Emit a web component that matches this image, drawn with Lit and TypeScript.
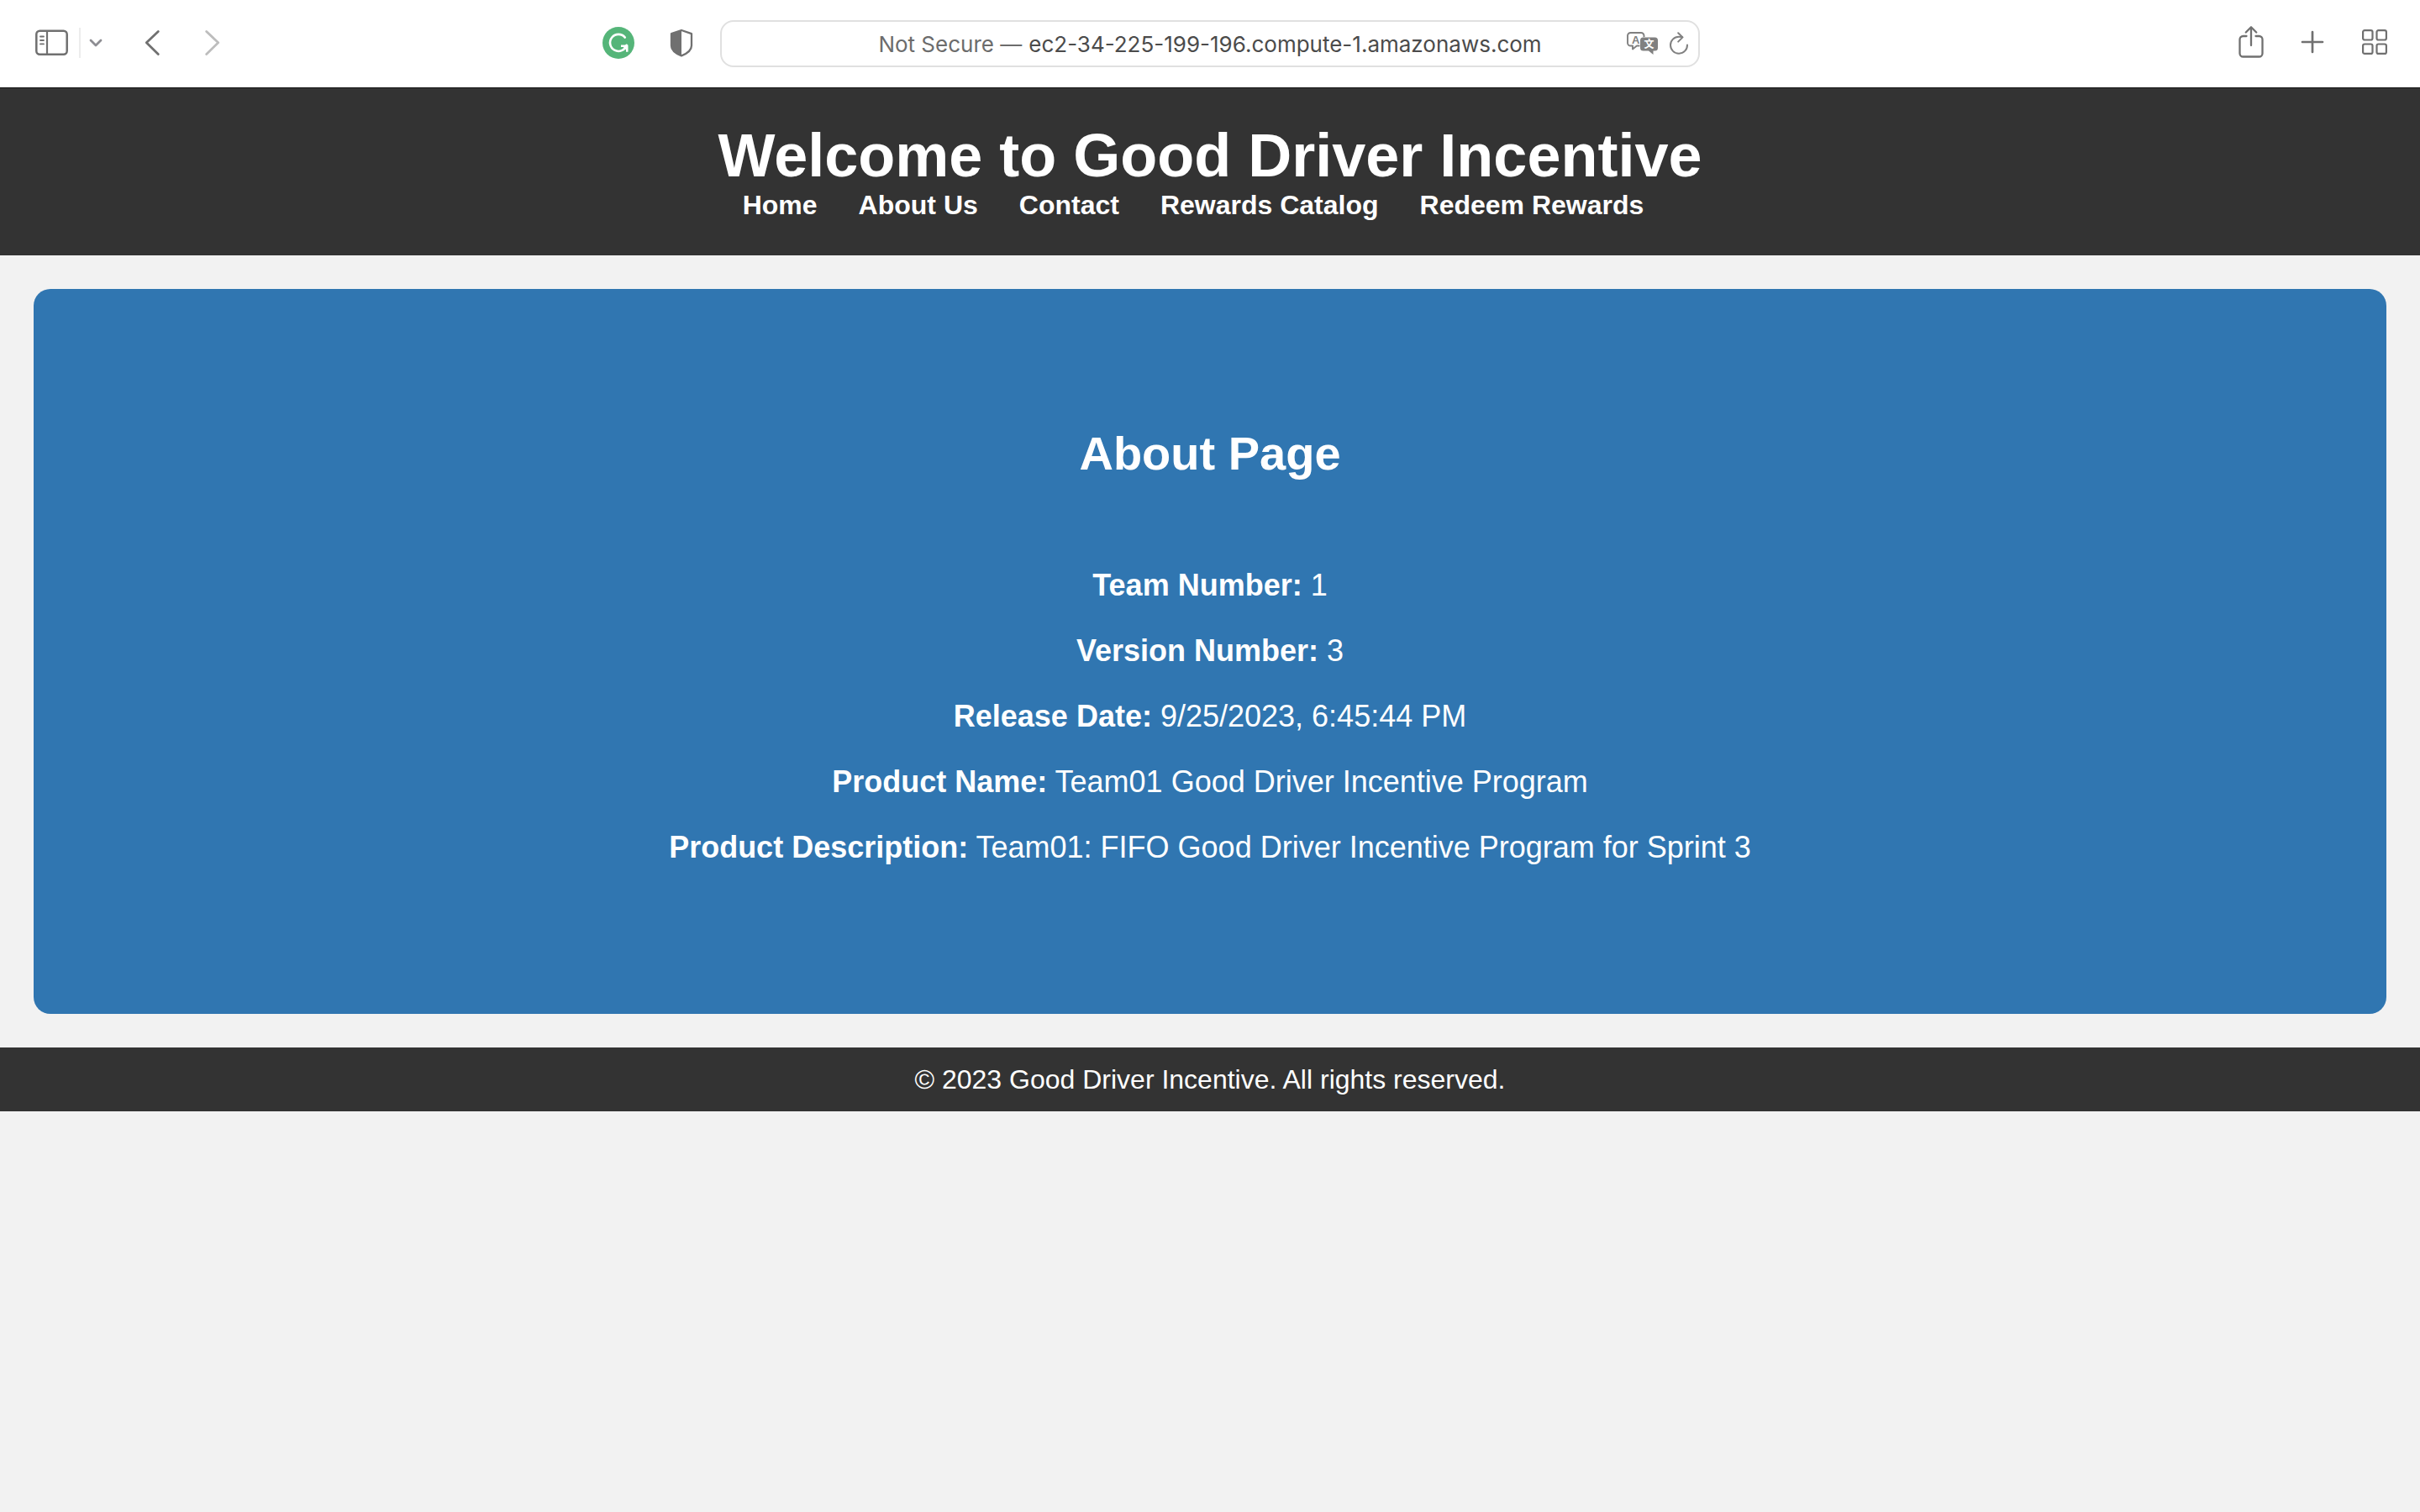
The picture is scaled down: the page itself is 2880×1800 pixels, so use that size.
import { LitElement, html, css, svg } from "lit";
import { customElement } from "lit/decorators.js";

const sidebarIcon = html`<svg width="40" height="32" viewBox="0 0 40 32" fill="none" stroke="currentColor" aria-hidden="true">
  <rect x="1.3" y="1.8" width="36.4" height="28" rx="4" stroke-width="2.5" />
  <path d="M14 2v28" stroke-width="2.2" />
  <path d="M6 8.5h4M6 13h4M6 17.4h4" stroke-width="1.8" stroke-linecap="round" />
</svg>`;

const chevronDownIcon = html`<svg width="16" height="12" viewBox="0 0 16 12" fill="none" stroke="currentColor" stroke-width="2.8" stroke-linecap="round" stroke-linejoin="round" aria-hidden="true">
  <path d="M2 3l6 6 6-6" />
</svg>`;

const backIcon = html`<svg width="20" height="32" viewBox="0 0 20 32" fill="none" stroke="currentColor" stroke-width="2.8" stroke-linecap="round" stroke-linejoin="round" aria-hidden="true">
  <path d="M16.3 2.4L2.3 15.8l14 13.6" />
</svg>`;

const forwardIcon = html`<svg width="20" height="32" viewBox="0 0 20 32" fill="none" stroke="currentColor" stroke-width="2.8" stroke-linecap="round" stroke-linejoin="round" aria-hidden="true">
  <path d="M1.700 2.4l14 13.4-14 13.6" />
</svg>`;

const grammarIcon = html`<svg width="38" height="38" viewBox="0 0 38 38" fill="none" aria-hidden="true">
  <circle cx="19" cy="19" r="19" fill="#55b579" />
  <path d="M26.8 12.6A10 10 0 1 0 28.6 21.8" stroke="#fff" stroke-width="2.6" stroke-linecap="round" />
  <path d="M22 22.8h7.2v7" stroke="#fff" stroke-width="2.4" />
  <path d="M23.4 22.4h6.8v7.2z" fill="#fff" />
</svg>`;

const shieldIcon = html`<svg width="28" height="34" viewBox="0 0 28 34" fill="none" aria-hidden="true">
  <path d="M14 2L26 6.2v14c0 6-6 9.800-12 12.200C8 30 2 26.200 2 20.200v-14z" stroke="currentColor" stroke-width="2.3" stroke-linejoin="round" />
  <path d="M14 1.500L1.500 6v14.500C1.500 26.500 8 30 14 32.500z" fill="currentColor" />
</svg>`;

const translateIcon = html`<svg width="38" height="28" viewBox="0 0 38 28" aria-hidden="true">
  <path d="M4.500 1h12.500a3.500 3.500 0 0 1 3.500 3.500v8.500a3.500 3.500 0 0 1-3.500 3.500h-5l-5 4v-4h-2.500a3.500 3.500 0 0 1-3.500-3.500V4.500A3.500 3.500 0 0 1 4.500 1z" fill="none" stroke="currentColor" stroke-width="1.900" stroke-linejoin="round" />
  <path d="M19.500 6.500h14a3.500 3.500 0 0 1 3.500 3.500v9a3.500 3.500 0 0 1-3.500 3.500h-2v4.500l-5.500-4.500h-6.500a3.500 3.500 0 0 1-3.500-3.500v-9a3.500 3.500 0 0 1 3.500-3.500z" fill="currentColor" stroke="#fff" stroke-width="1" paint-order="stroke" />
  <text class="glyph" x="10.600" y="13.500" font-size="13" font-weight="700" text-anchor="middle" fill="currentColor">A</text>
  <text class="glyph" x="26.600" y="18.800" font-size="12" font-weight="700" text-anchor="middle" fill="#fff">文</text>
</svg>`;

const reloadIcon = html`<svg width="24" height="28" viewBox="0 0 24 28" fill="none" stroke="currentColor" stroke-width="2" stroke-linecap="round" stroke-linejoin="round" aria-hidden="true">
  <path d="M22 15.500A10 10 0 1 1 12 5.700q2 0 4 .4" />
  <path d="M11.200 1.200l5.300 5.200-5.300 5.200" />
</svg>`;

const shareIcon = html`<svg width="30" height="38" viewBox="0 0 30 38" fill="none" stroke="currentColor" stroke-width="2.300" stroke-linecap="round" stroke-linejoin="round" aria-hidden="true">
  <path d="M9.500 12H5.500a4 4 0 0 0-4 4v16.500a4 4 0 0 0 4 4h19a4 4 0 0 0 4-4V16a4 4 0 0 0-4-4h-4" />
  <path d="M15 23V1.500M8.800 7.500L15 1.300l6.200 6.200" />
</svg>`;

const plusIcon = html`<svg width="28" height="28" viewBox="0 0 28 28" fill="none" stroke="currentColor" stroke-width="2.700" stroke-linecap="round" aria-hidden="true">
  <path d="M14 2v24M2 14h24" />
</svg>`;

const gridIcon = html`<svg width="32" height="32" viewBox="0 0 32 32" fill="none" stroke="currentColor" stroke-width="2.200" aria-hidden="true">
  ${[2.1, 18.5].map((x) =>
    [2.1, 18.5].map((y) => svg`<rect x=${x} y=${y} width="11.400" height="11.400" rx="2" />`)
  )}
</svg>`;

@customElement("browser-toolbar")
export class BrowserToolbar extends LitElement {
  static styles = css`
    :host {
      display: block;
      background: #fff;
      color: #707070;
    }
    .bar {
      display: grid;
      grid-template-columns: minmax(0, 857fr) minmax(0, 1166fr) minmax(0, 857fr);
      align-items: center;
      height: 104px;
    }
    .side {
      display: flex;
      align-items: center;
    }
    button {
      display: flex;
      margin: 0;
      padding: 0;
      border: 0;
      background: none;
      color: inherit;
    }
    svg {
      display: block;
    }
    .start {
      padding: 0 32px 2px 42px;
    }
    .divider {
      width: 2px;
      height: 36px;
      margin: 0 10px 0 12px;
      background: #ececec;
    }
    .menu {
      color: #8e8e93;
    }
    .back {
      margin-left: 50px;
    }
    .forward {
      margin-left: 52px;
      color: #bdbdbd;
    }
    .grammar {
      margin-left: auto;
    }
    .shield {
      margin-left: 42px;
    }
    .address {
      display: grid;
      grid-template-columns: minmax(0, 1fr) auto minmax(0, 1fr);
      align-items: center;
      box-sizing: border-box;
      height: 56px;
      border: 2px solid #e0e0e0;
      border-radius: 16px;
      background: #fff;
    }
    .location {
      grid-column: 2;
      display: flex;
      align-items: center;
      gap: 8px;
      padding-top: 2px;
      font: 26px/32px Inter, "Liberation Sans", sans-serif;
      color: #6c6c6c;
    }
    .url {
      field-sizing: content;
      margin: 0;
      padding: 0;
      border: 0;
      outline: 0;
      background: none;
      font: inherit;
      color: #4b4b4b;
    }
    .tools {
      display: flex;
      justify-content: flex-end;
      align-items: center;
      gap: 12px;
      padding-right: 11px;
      color: #808080;
    }
    .glyph {
      font-family: "Liberation Sans", "Noto Sans CJK SC", sans-serif;
    }
    .end {
      justify-content: flex-end;
      gap: 44px;
      padding: 0 38px 4px 0;
    }
  `;

  render() {
    return html`
      <div class="bar">
        <div class="side start">
          <button aria-label="Show sidebar">${sidebarIcon}</button>
          <span class="divider"></span>
          <button class="menu" aria-label="Tab groups">${chevronDownIcon}</button>
          <button class="back" aria-label="Back">${backIcon}</button>
          <button class="forward" aria-label="Forward">${forwardIcon}</button>
          <button class="grammar" aria-label="Writing assistant">${grammarIcon}</button>
          <button class="shield" aria-label="Privacy report">${shieldIcon}</button>
        </div>
        <div class="address">
          <div class="location">
            <label for="url">Not Secure —</label>
            <input class="url" id="url" type="text" spellcheck="false" value="ec2-34-225-199-196.compute-1.amazonaws.com" />
          </div>
          <div class="tools">
            <button aria-label="Translate">${translateIcon}</button>
            <button aria-label="Reload">${reloadIcon}</button>
          </div>
        </div>
        <div class="side end">
          <button aria-label="Share">${shareIcon}</button>
          <button aria-label="New tab">${plusIcon}</button>
          <button aria-label="Tab overview">${gridIcon}</button>
        </div>
      </div>
    `;
  }
}

const links = ["Home", "About Us", "Contact", "Rewards Catalog", "Redeem Rewards"];

const details = [
  ["Team Number:", "1"],
  ["Version Number:", "3"],
  ["Release Date:", "9/25/2023, 6:45:44 PM"],
  ["Product Name:", "Team01 Good Driver Incentive Program"],
  ["Product Description:", "Team01: FIFO Good Driver Incentive Program for Sprint 3"],
];

@customElement("app-root")
export class AppRoot extends LitElement {
  static styles = css`
    :host {
      display: block;
      min-height: 100vh;
      background: #f2f2f2;
      color: #fff;
      font: 32px/36px "Liberation Sans", Arial, sans-serif;
      text-align: center;
    }
    h1,
    h2,
    p,
    ul {
      margin: 0;
      padding: 0;
    }
    .header {
      padding: 40px 40px 42px;
      background: #333;
      box-shadow: inset 0 1px #111;
    }
    .title {
      font-size: 72px;
      line-height: 82px;
    }
    .links {
      display: flex;
      justify-content: center;
      gap: 49px;
      padding-right: 40px;
      list-style: none;
      font-weight: 700;
    }
    .link {
      color: #fff;
      text-decoration: none;
    }
    .card {
      display: flex;
      flex-direction: column;
      gap: 36px;
      margin: 40px;
      padding: 164px 40px 177px;
      border-radius: 20px;
      background: #3076b1;
      font-size: 36px;
      line-height: 42px;
    }
    .heading {
      margin-bottom: 68px;
      font-size: 56px;
      line-height: 64px;
    }
    .footer {
      padding: 20px;
      background: #333;
    }
  `;

  render() {
    return html`
      <browser-toolbar></browser-toolbar>
      <header class="header">
        <h1 class="title">Welcome to Good Driver Incentive</h1>
        <nav>
          <ul class="links">
            ${links.map((label) => html`<li><a class="link" href="#">${label}</a></li>`)}
          </ul>
        </nav>
      </header>
      <main class="card">
        <h2 class="heading">About Page</h2>
        ${details.map(([name, value]) => html`<p><strong>${name}</strong> ${value}</p>`)}
      </main>
      <footer class="footer"><p>© 2023 Good Driver Incentive. All rights reserved.</p></footer>
    `;
  }
}
